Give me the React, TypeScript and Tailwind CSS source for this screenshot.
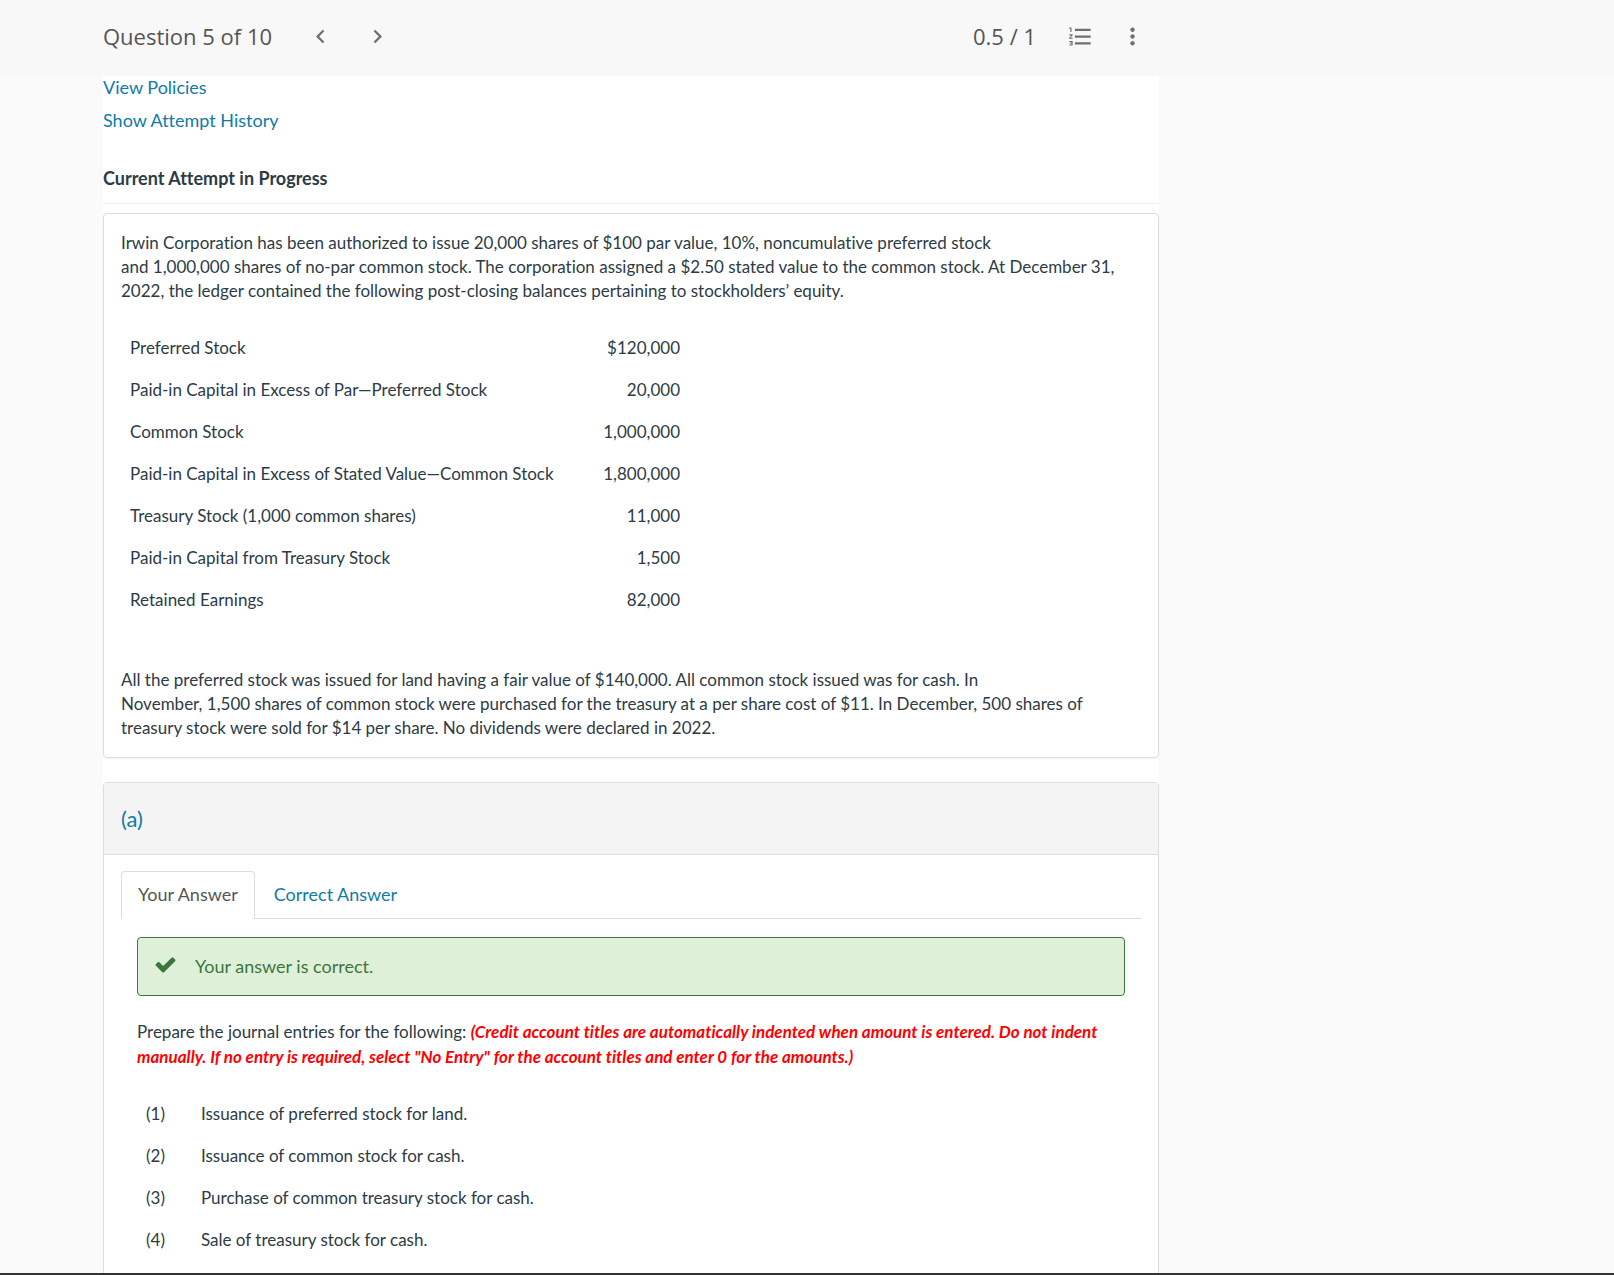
import { ReactNode } from "react";
import { MdChevronLeft, MdChevronRight, MdFormatListNumbered, MdMoreVert } from "react-icons/md";

const balances: [string, string][] = [
  ["Preferred Stock", "$120,000"],
  ["Paid-in Capital in Excess of Par—Preferred Stock", "20,000"],
  ["Common Stock", "1,000,000"],
  ["Paid-in Capital in Excess of Stated Value—Common Stock", "1,800,000"],
  ["Treasury Stock (1,000 common shares)", "11,000"],
  ["Paid-in Capital from Treasury Stock", "1,500"],
  ["Retained Earnings", "82,000"],
];

const entries = [
  "Issuance of preferred stock for land.",
  "Issuance of common stock for cash.",
  "Purchase of common treasury stock for cash.",
  "Sale of treasury stock for cash.",
];

function IconButton({ label, children }: { label: string; children: ReactNode }) {
  return (
    <button type="button" aria-label={label} className="flex size-8 items-center justify-center text-[#6f6f6f]">
      {children}
    </button>
  );
}

function CheckMark() {
  return (
    <svg aria-hidden="true" width="23" height="23" viewBox="0 0 1792 1792" fill="currentColor" className="-mt-1">
      <path d="M1671 566q0 40-28 68l-724 724-136 136q-28 28-68 28t-68-28l-136-136-362-362q-28-28-28-68t28-68l136-136q28-28 68-28t68 28l294 295 656-657q28-28 68-28t68 28l136 136q28 28 28 68z" />
    </svg>
  );
}

export default function App() {
  return (
    <div className="flex h-screen flex-col bg-[#fafafa] font-['Lato',sans-serif] text-[18px] leading-6 text-[#2d3b45] [font-variant-ligatures:none]">
      <header className="h-[76px] shrink-0 bg-[#f8f8f8] pl-[103px] font-['Open_Sans',sans-serif] text-[22px] text-[#555]">
        <div className="flex h-[72px] max-w-[1056px] items-center">
          <h1>Question 5 of 10</h1>
          <nav aria-label="Questions" className="ml-8 flex gap-[25px]">
            <IconButton label="Previous question"><MdChevronLeft size={27} /></IconButton>
            <IconButton label="Next question"><MdChevronRight size={27} /></IconButton>
          </nav>
          <div className="ml-auto flex items-center">
            <span>0.5 / 1</span>
            <div className="ml-7 flex gap-5 pr-[11px]">
              <IconButton label="Question list"><MdFormatListNumbered size={27} /></IconButton>
              <IconButton label="More options"><MdMoreVert size={27} /></IconButton>
            </div>
          </div>
        </div>
      </header>

      <div className="min-h-0 flex-1 overflow-hidden pl-[103px]">
        <main className="max-w-[1056px] bg-white">
          <div className="flex flex-col items-start gap-[11px] leading-[22px] text-[#0f7ba8]">
            <a href="#policies">View Policies</a>
            <a href="#history">Show Attempt History</a>
          </div>
          <h2 className="mt-8 border-b border-[#eee] pt-[3px] pb-[13px] font-bold">Current Attempt in Progress</h2>

          <section className="mt-[9px] rounded border border-[#ddd] p-[17px] text-[17px] shadow-xs">
            <p>
              Irwin Corporation has been authorized to issue 20,000 shares of $100 par value, 10%, noncumulative
              preferred stock
              <br />
              and 1,000,000 shares of no-par common stock. The corporation assigned a $2.50 stated value to the common
              stock. At December&nbsp;31,
              <br />
              2022, the ledger contained the following post-closing balances pertaining to stockholders’ equity.
            </p>
            <table className="mt-6 w-[568px]">
              <tbody>
                {balances.map(([account, amount]) => (
                  <tr key={account}>
                    <td className="p-[9px]">{account}</td>
                    <td className="p-[9px] text-right">{amount}</td>
                  </tr>
                ))}
              </tbody>
            </table>
            <p className="mt-[47px]">
              All the preferred stock was issued for land having a fair value of $140,000. All common stock issued was
              for cash. In
              <br />
              November, 1,500 shares of common stock were purchased for the treasury at a per share cost of $11. In
              December, 500 shares of
              <br />
              treasury stock were sold for $14 per share. No dividends were declared in 2022.
            </p>
          </section>

          <section className="mt-6 rounded-t border border-[#ddd]">
            <h3 className="border-b border-[#ddd] bg-[#f4f4f4] px-[17px] pt-6 pb-[23px] text-[22px] leading-6 text-[#0f7ba8]">(a)</h3>
            <div className="px-[17px] pt-4 pb-8">
              <div role="tablist" className="flex border-b border-[#ddd]">
                <button
                  type="button"
                  role="tab"
                  aria-selected="true"
                  className="-mb-px rounded-t border border-b-0 border-[#ddd] bg-white px-4 pt-[10px] pb-[13px] text-[#555]"
                >
                  Your Answer
                </button>
                <button type="button" role="tab" aria-selected="false" className="px-[19px] pt-[11px] pb-3 text-[#0f7ba8]">
                  Correct Answer
                </button>
              </div>
              <div className="px-4 pt-[18px]">
                <div role="status" className="flex items-center rounded border border-[#3c763d] bg-[#dff0d8] px-4 pt-4 pb-[17px] text-[#3c763d]">
                  <CheckMark />
                  <span className="ml-[18px]">Your answer is correct.</span>
                </div>
                <p className="mt-[23px] text-[17px] leading-[25px]">
                  Prepare the journal entries for the following:{" "}
                  <strong className="font-bold text-[#f00] italic">
                    (Credit account titles are automatically indented when amount is entered. Do not indent
                    <br />
                    manually. If no entry is required, select "No Entry" for the account titles and enter 0 for the
                    amounts.)
                  </strong>
                </p>
                <table className="mt-6 text-[17px]">
                  <tbody>
                    {entries.map((entry, i) => (
                      <tr key={entry}>
                        <td className="py-[9px] pr-9 pl-[9px]">({i + 1})</td>
                        <td className="py-[9px]">{entry}</td>
                      </tr>
                    ))}
                  </tbody>
                </table>
              </div>
            </div>
          </section>
        </main>
      </div>
      <div className="h-0.5 shrink-0 bg-[#333]" />
    </div>
  );
}
